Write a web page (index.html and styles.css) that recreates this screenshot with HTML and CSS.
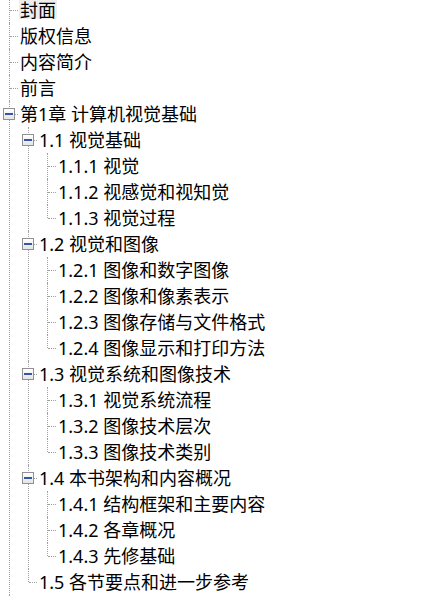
FILE: index.html
```html
<!DOCTYPE html>
<html lang="zh">
<head>
<meta charset="utf-8">
<title>目录</title>
<link rel="stylesheet" href="styles.css">
</head>
<body>
<ul class="tree">
  <li><span class="label selected">封面</span></li>
  <li><span class="label">版权信息</span></li>
  <li><span class="label">内容简介</span></li>
  <li><span class="label">前言</span></li>
  <li class="open"><span class="toggle"></span><span class="label">第1章 计算机视觉基础</span>
    <ul>
      <li class="open"><span class="toggle"></span><span class="label">1.1 视觉基础</span>
        <ul>
          <li><span class="label">1.1.1 视觉</span></li>
          <li><span class="label">1.1.2 视感觉和视知觉</span></li>
          <li><span class="label">1.1.3 视觉过程</span></li>
        </ul>
      </li>
      <li class="open"><span class="toggle"></span><span class="label">1.2 视觉和图像</span>
        <ul>
          <li><span class="label">1.2.1 图像和数字图像</span></li>
          <li><span class="label">1.2.2 图像和像素表示</span></li>
          <li><span class="label">1.2.3 图像存储与文件格式</span></li>
          <li><span class="label">1.2.4 图像显示和打印方法</span></li>
        </ul>
      </li>
      <li class="open"><span class="toggle"></span><span class="label">1.3 视觉系统和图像技术</span>
        <ul>
          <li><span class="label">1.3.1 视觉系统流程</span></li>
          <li><span class="label">1.3.2 图像技术层次</span></li>
          <li><span class="label">1.3.3 图像技术类别</span></li>
        </ul>
      </li>
      <li class="open"><span class="toggle"></span><span class="label">1.4 本书架构和内容概况</span>
        <ul>
          <li><span class="label">1.4.1 结构框架和主要内容</span></li>
          <li><span class="label">1.4.2 各章概况</span></li>
          <li><span class="label">1.4.3 先修基础</span></li>
        </ul>
      </li>
      <li><span class="label">1.5 各节要点和进一步参考</span></li>
    </ul>
  </li>
  <li class="more"></li>
</ul>
</body>
</html>
```

FILE: styles.css
```css
html, body {
  margin: 0;
  padding: 0;
  background: #ffffff;
  overflow: hidden;
  height: 596px;
}

.tree {
  list-style: none;
  margin: -3px 0 0 0;
  padding: 0;
  font-family: "Noto Sans", "Noto Sans CJK SC", sans-serif;
  font-size: 18px;
  color: #000000;
}

.tree ul {
  list-style: none;
  margin: 0;
  padding: 0;
}

.tree li {
  position: relative;
  padding-left: 19px;
}

.tree li.more {
  height: 26px;
}

/* vertical connector */
.tree li::before {
  content: "";
  position: absolute;
  left: 9px;
  top: 0;
  bottom: 0;
  border-left: 1px dotted #a0a0a0;
}

.tree li:last-child::before {
  bottom: auto;
  height: 13px;
}

/* horizontal connector */
.tree li::after {
  content: "";
  position: absolute;
  left: 10px;
  top: 13px;
  width: 8px;
  border-top: 1px dotted #a0a0a0;
}

.label {
  display: inline-block;
  height: 26px;
  line-height: 26px;
  padding: 0 1px;
  white-space: nowrap;
  vertical-align: top;
}

.label.selected {
  background: linear-gradient(#ffffff 0, #ffffff 3px, #eeeeee 3px, #eeeeee 22px, #ffffff 22px);
}

.toggle {
  position: absolute;
  left: 3px;
  top: 7px;
  width: 12px;
  height: 12px;
  box-sizing: border-box;
  border: 1px solid #919191;
  background: linear-gradient(#ffffff, #e4e4e4);
  z-index: 1;
}

.toggle::after {
  content: "";
  position: absolute;
  left: 1px;
  right: 1px;
  top: 4px;
  height: 2px;
  background: #3556a8;
}
```
